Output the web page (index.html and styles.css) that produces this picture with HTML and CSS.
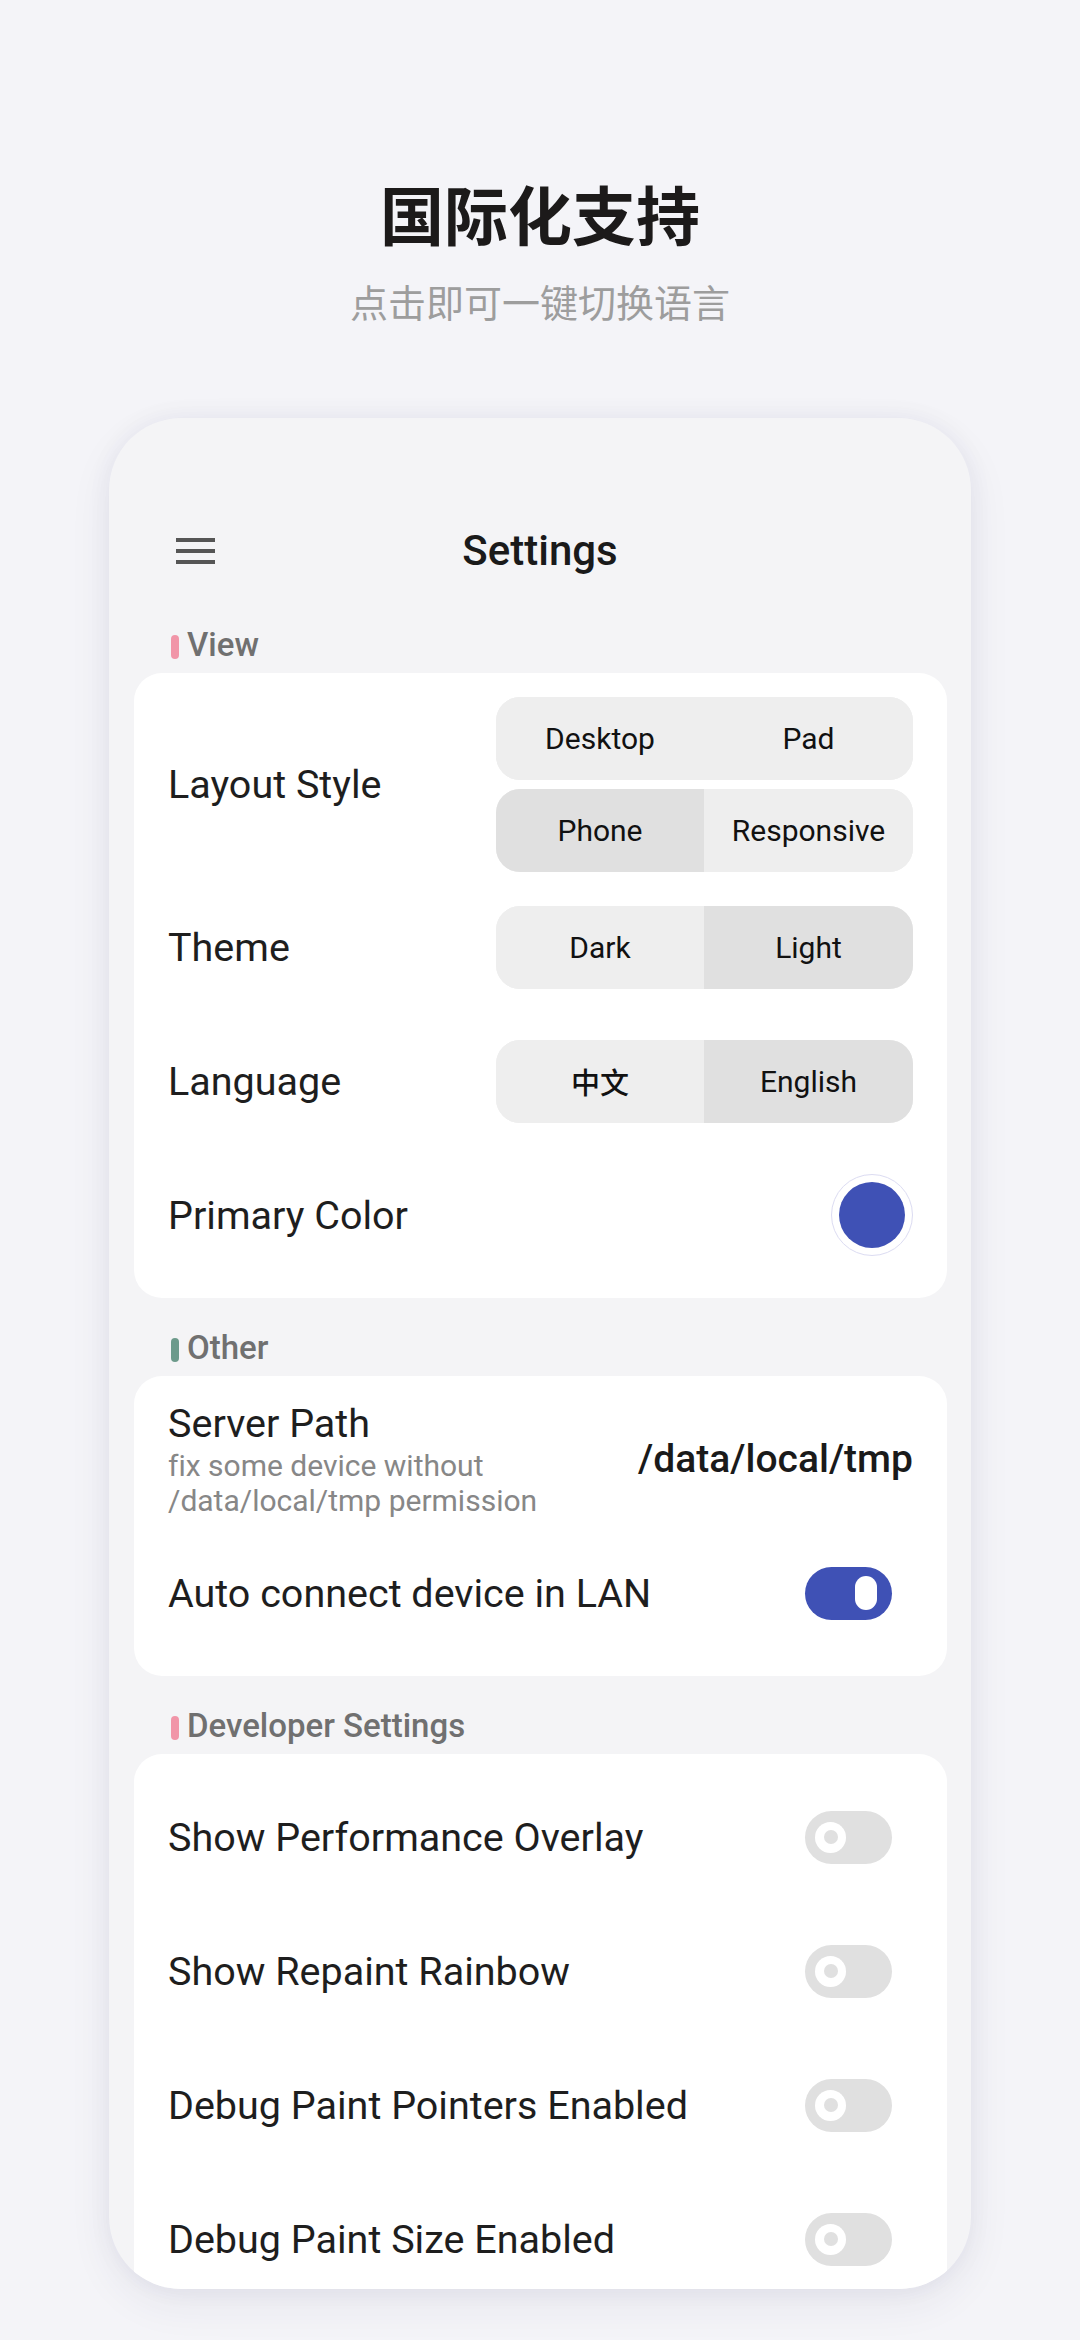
FILE: index.html
```html
<!DOCTYPE html>
<html lang="zh">
<head>
<meta charset="utf-8">
<title>Settings</title>
<link rel="stylesheet" href="styles.css">
</head>
<body>
<div class="intro">
  <div class="title">国际化支持</div>
  <div class="subtitle">点击即可一键切换语言</div>
</div>

<div class="phone">
  <div class="appbar">
    <div class="appbar-left">
      <svg class="menu-icon" width="40" height="28" viewBox="0 0 40 28">
        <rect x="0" y="1" width="39" height="4" fill="#555"/>
        <rect x="0" y="12" width="39" height="4" fill="#555"/>
        <rect x="0" y="23" width="39" height="4" fill="#555"/>
      </svg>
    </div>
    <div class="appbar-title">Settings</div>
    <div></div>
  </div>

  <div class="section-label"><span class="bar bar-pink"></span>View</div>
  <div class="card">
    <div class="row row-tall">
      <div class="label">Layout Style</div>
      <div class="seg-stack">
        <div class="seg">
          <div class="seg-item">Desktop</div>
          <div class="seg-item">Pad</div>
        </div>
        <div class="seg">
          <div class="seg-item selected">Phone</div>
          <div class="seg-item">Responsive</div>
        </div>
      </div>
    </div>
    <div class="row">
      <div class="label">Theme</div>
      <div class="seg">
        <div class="seg-item">Dark</div>
        <div class="seg-item selected">Light</div>
      </div>
    </div>
    <div class="row">
      <div class="label">Language</div>
      <div class="seg">
        <div class="seg-item cjk">中文</div>
        <div class="seg-item selected">English</div>
      </div>
    </div>
    <div class="row">
      <div class="label">Primary Color</div>
      <div class="color-ring"><div class="color-dot"></div></div>
    </div>
  </div>

  <div class="section-label spaced"><span class="bar bar-green"></span>Other</div>
  <div class="card">
    <div class="row">
      <div class="text-col">
        <div class="label">Server Path</div>
        <div class="sublabel">fix some device without /data/local/tmp permission</div>
      </div>
      <div class="value">/data/local/tmp</div>
    </div>
    <div class="row">
      <div class="label">Auto connect device in LAN</div>
      <div class="switch on"><div class="thumb-on"></div></div>
    </div>
  </div>

  <div class="section-label spaced"><span class="bar bar-pink"></span>Developer Settings</div>
  <div class="card">
    <div class="row">
      <div class="label">Show Performance Overlay</div>
      <div class="switch off"><div class="thumb-off"><div class="dot"></div></div></div>
    </div>
    <div class="row">
      <div class="label">Show Repaint Rainbow</div>
      <div class="switch off"><div class="thumb-off"><div class="dot"></div></div></div>
    </div>
    <div class="row">
      <div class="label">Debug Paint Pointers Enabled</div>
      <div class="switch off"><div class="thumb-off"><div class="dot"></div></div></div>
    </div>
    <div class="row">
      <div class="label">Debug Paint Size Enabled</div>
      <div class="switch off"><div class="thumb-off"><div class="dot"></div></div></div>
    </div>
  </div>
</div>
</body>
</html>
```

FILE: styles.css
```css
* {
  box-sizing: border-box;
}

html, body {
  margin: 0;
  padding: 0;
}

body {
  width: 1080px;
  height: 2340px;
  overflow: hidden;
  background: #f4f4f8;
  font-family: Roboto, "Noto Sans CJK SC", sans-serif;
  font-variant-ligatures: none;
  color: #1e1e1e;
}

.intro {
  padding-top: 180px;
  text-align: center;
  font-family: "Noto Sans CJK SC", sans-serif;
}

.title {
  font-size: 64px;
  line-height: 64px;
  font-weight: 700;
  color: #1c1a1a;
}

.subtitle {
  margin-top: 38px;
  font-size: 38px;
  line-height: 38px;
  font-weight: 400;
  color: #9d9d9d;
}

.phone {
  width: 862px;
  height: 1871px;
  margin: 98px auto 0;
  background: #f4f4f6;
  border-radius: 72px;
  overflow: hidden;
  padding-top: 77px;
  box-shadow: 0 14px 44px rgba(40, 40, 90, 0.07), 0 0 24px rgba(40, 40, 90, 0.05);
}

.appbar {
  height: 112px;
  display: grid;
  grid-template-columns: 1fr auto 1fr;
  align-items: center;
  padding: 0 67px;
}

.appbar-left {
  display: flex;
  align-items: center;
}

.menu-icon {
  display: block;
}

.appbar-title {
  font-size: 42px;
  font-weight: 500;
  color: #1a1a1a;
  line-height: 50px;
}

.section-label {
  display: flex;
  align-items: center;
  margin: 18px 0 8px 62px;
  font-size: 33px;
  line-height: 40px;
  font-weight: 500;
  color: #707070;
}

.section-label.spaced {
  margin-top: 30px;
}

.bar {
  width: 8px;
  height: 24px;
  border-radius: 4px;
  margin-right: 8px;
  margin-top: 4px;
}

.bar-pink {
  background: #f195a8;
}

.bar-green {
  background: #6c9a8b;
}

.card {
  margin: 0 24px 0 25px;
  background: #ffffff;
  border-radius: 28px;
  padding: 16px 0;
}

.row {
  display: flex;
  align-items: center;
  justify-content: space-between;
  gap: 24px;
  min-height: 134px;
  padding: 8px 34px;
}

.label {
  font-size: 39.5px;
  font-weight: 400;
  color: #1e1e1e;
  white-space: nowrap;
}

.seg-stack {
  display: flex;
  flex-direction: column;
  gap: 9px;
}

.seg {
  width: 417px;
  height: 83px;
  border-radius: 24px;
  overflow: hidden;
  display: grid;
  grid-template-columns: 208px 1fr;
  background: #eeeeee;
}

.seg-item {
  display: flex;
  align-items: center;
  justify-content: center;
  font-size: 30px;
  font-weight: 400;
  color: #111111;
  background: #eeeeee;
}

.seg-item.selected {
  background: #e0e0e0;
}

.seg-item.cjk {
  font-family: "Noto Sans CJK SC", sans-serif;
  font-size: 29px;
  font-weight: 500;
}

.color-ring {
  width: 82px;
  height: 82px;
  border-radius: 50%;
  border: 1px solid #dcdcf2;
  display: flex;
  align-items: center;
  justify-content: center;
}

.color-dot {
  width: 66px;
  height: 66px;
  border-radius: 50%;
  background: #3f51b5;
}

.text-col {
  flex: 1;
  min-width: 0;
}

.text-col .label {
  line-height: 48px;
}

.sublabel {
  font-size: 30px;
  line-height: 35px;
  color: #878787;
}

.value {
  font-size: 39px;
  font-weight: 500;
  color: #1a1a1a;
  white-space: nowrap;
}

.switch {
  width: 87px;
  height: 53px;
  border-radius: 27px;
  margin-right: 21px;
  display: flex;
  align-items: center;
  flex-shrink: 0;
}

.switch.on {
  background: #3f51b5;
  justify-content: flex-end;
  padding-right: 15px;
}

.thumb-on {
  width: 22px;
  height: 34px;
  border-radius: 11px;
  background: #ffffff;
}

.switch.off {
  background: #e0e0e0;
  justify-content: flex-start;
  padding-left: 10px;
}

.thumb-off {
  width: 31px;
  height: 31px;
  border-radius: 50%;
  background: #ffffff;
  display: flex;
  align-items: center;
  justify-content: center;
}

.dot {
  width: 14px;
  height: 14px;
  border-radius: 50%;
  background: #e0e0e0;
}
```
